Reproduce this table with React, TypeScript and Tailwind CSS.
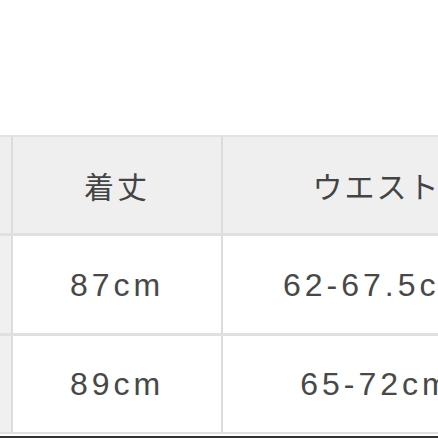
import React from "react";

const rows = [
  ["87cm", "62-67.5cm"],
  ["89cm", "65-72cm"],
];

export default function App() {
  return (
    <div className="w-[438px] h-[438px] overflow-hidden bg-white relative" style={{ fontFamily: '"Liberation Sans", "Noto Sans CJK JP", sans-serif' }}>
      <div className="h-[135px]" />
      <div className="w-[530px] border-t-2 border-[#e2e2e2]">
        <div className="grid grid-cols-[13px_210px_307px] h-[99px] bg-[#efefef] border-b-[3px] border-[#e0e0e0]">
          <div className="border-r-2 border-[#dcdcdc]" />
          <div className="border-r-2 border-[#dcdcdc] flex items-center justify-center text-[30px] tracking-[3px] text-[#444]" style={{ fontFamily: '"Noto Sans CJK JP", sans-serif' }}>着丈</div>
          <div className="flex items-center justify-center text-[30px] tracking-[2px] text-[#444]" style={{ fontFamily: '"Noto Sans CJK JP", sans-serif' }}>ウエスト</div>
        </div>
        {rows.map((r, i) => (
          <div key={i} className={`grid grid-cols-[13px_210px_307px] ${i === 0 ? "h-[100px] border-b-[3px]" : "h-[98px] border-b-2"} border-[#e0e0e0] bg-white`}>
            <div className="border-r-2 border-[#dcdcdc] bg-[#f0f0f0]" />
            <div className="border-r-2 border-[#dcdcdc] flex items-center justify-center text-[32px] tracking-[4px] text-[#484848]">{r[0]}</div>
            <div className="flex items-center justify-center text-[32px] tracking-[4px] text-[#484848]">{r[1]}</div>
          </div>
        ))}
        <div className="h-[2px] bg-white" />
        <div className="h-[4px] bg-[#333]" />
      </div>
    </div>
  );
}
